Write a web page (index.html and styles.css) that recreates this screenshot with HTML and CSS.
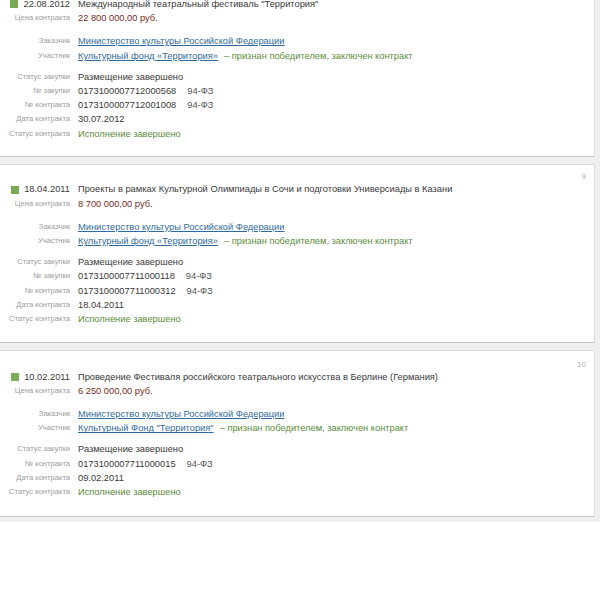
FILE: index.html
```html
<!DOCTYPE html>
<html lang="ru">
<head>
<meta charset="utf-8">
<title>Контракты</title>
<link rel="stylesheet" href="styles.css">
</head>
<body>
<div class="list">
  <article class="card">
    <div class="num"></div>
    <div class="grp">
      <div class="lbl head"><span class="sq"></span><span class="date">22.08.2012</span></div>
      <div class="val">Международный театральный фестиваль "Территория"</div>
      <div class="lbl">Цена контракта</div>
      <div class="val price">22 800 000,00 руб.</div>
    </div>
    <div class="grp g2">
      <div class="lbl">Заказчик</div>
      <div class="val"><a class="link" href="#">Министерство культуры Российской Федерации</a></div>
      <div class="lbl">Участник</div>
      <div class="val"><a class="link" href="#">Культурный фонд «Территория»</a><span class="won">– признан победителем, заключен контракт</span></div>
    </div>
    <div class="grp g3">
      <div class="lbl">Статус закупки</div>
      <div class="val">Размещение завершено</div>
      <div class="lbl">№ закупки</div>
      <div class="val">0173100007712000568<span class="law">94-ФЗ</span></div>
      <div class="lbl">№ контракта</div>
      <div class="val">0173100007712001008<span class="law">94-ФЗ</span></div>
      <div class="lbl">Дата контракта</div>
      <div class="val">30.07.2012</div>
      <div class="lbl">Статус контракта</div>
      <div class="val done">Исполнение завершено</div>
    </div>
  </article>

  <article class="card">
    <div class="num">9</div>
    <div class="grp">
      <div class="lbl head"><span class="sq"></span><span class="date">18.04.2011</span></div>
      <div class="val">Проекты в рамках Культурной Олимпиады в Сочи и подготовки Универсиады в Казани</div>
      <div class="lbl">Цена контракта</div>
      <div class="val price">8 700 000,00 руб.</div>
    </div>
    <div class="grp g2">
      <div class="lbl">Заказчик</div>
      <div class="val"><a class="link" href="#">Министерство культуры Российской Федерации</a></div>
      <div class="lbl">Участник</div>
      <div class="val"><a class="link" href="#">Культурный фонд «Территория»</a><span class="won">– признан победителем, заключен контракт</span></div>
    </div>
    <div class="grp g3">
      <div class="lbl">Статус закупки</div>
      <div class="val">Размещение завершено</div>
      <div class="lbl">№ закупки</div>
      <div class="val">0173100007711000118<span class="law">94-ФЗ</span></div>
      <div class="lbl">№ контракта</div>
      <div class="val">0173100007711000312<span class="law">94-ФЗ</span></div>
      <div class="lbl">Дата контракта</div>
      <div class="val">18.04.2011</div>
      <div class="lbl">Статус контракта</div>
      <div class="val done">Исполнение завершено</div>
    </div>
  </article>

  <article class="card last">
    <div class="num">10</div>
    <div class="grp">
      <div class="lbl head"><span class="sq"></span><span class="date">10.02.2011</span></div>
      <div class="val">Проведение Фестиваля российского театрального искусства в Берлине (Германия)</div>
      <div class="lbl">Цена контракта</div>
      <div class="val price">6 250 000,00 руб.</div>
    </div>
    <div class="grp g2">
      <div class="lbl">Заказчик</div>
      <div class="val"><a class="link" href="#">Министерство культуры Российской Федерации</a></div>
      <div class="lbl">Участник</div>
      <div class="val"><a class="link" href="#">Культурный Фонд "Территория"</a><span class="won">– признан победителем, заключен контракт</span></div>
    </div>
    <div class="grp g3">
      <div class="lbl">Статус закупки</div>
      <div class="val">Размещение завершено</div>
      <div class="lbl">№ контракта</div>
      <div class="val">0173100007711000015<span class="law">94-ФЗ</span></div>
      <div class="lbl">Дата контракта</div>
      <div class="val">09.02.2011</div>
      <div class="lbl">Статус контракта</div>
      <div class="val done">Исполнение завершено</div>
    </div>
  </article>
</div>
</body>
</html>
```
FILE: styles.css
```css
html, body {
  margin: 0;
  padding: 0;
  background: #ffffff;
}
body {
  font-family: "Liberation Sans", Arial, sans-serif;
  color: #3a3a3a;
}
.list {
  background: #efefef;
  margin: -21px 0 0 -20px;
  padding: 0 5px 5px 0;
}
.card {
  background: #ffffff;
  border: 1px solid #dddddd;
  border-bottom-color: #c4c4c4;
  margin-bottom: 7px;
  padding: 6px 0 15.5px 0;
}
.card.last {
  margin-bottom: 0;
  padding-top: 8px;
  padding-bottom: 17px;
}
.num {
  height: 11px;
  text-align: right;
  padding-right: 8px;
  font-size: 8px;
  line-height: 11px;
  color: #aaaaaa;
}
.grp {
  display: grid;
  grid-template-columns: 89px 1fr;
  column-gap: 8px;
  line-height: 14.4px;
}
.g2 {
  margin-top: 8.6px;
}
.g3 {
  margin-top: 6.6px;
  line-height: 14.2px;
}
.lbl {
  text-align: right;
  font-size: 7.6px;
  color: #9c9c9c;
  white-space: nowrap;
}
.lbl.head {
  display: flex;
  justify-content: flex-end;
  align-items: center;
  gap: 5px;
}
.sq {
  width: 8px;
  height: 8px;
  background: #79ab55;
}
.date {
  font-size: 9.3px;
  color: #3a3a3a;
}
.val {
  font-size: 9.3px;
  color: #3a3a3a;
  white-space: nowrap;
}
.price {
  color: #7a2b22;
}
.link {
  color: #2f6aa0;
  text-decoration: underline;
}
.won {
  color: #5c8e3c;
  margin-left: 6px;
}
.law {
  margin-left: 11px;
  color: #555555;
}
.done {
  color: #5a8c38;
}
```
